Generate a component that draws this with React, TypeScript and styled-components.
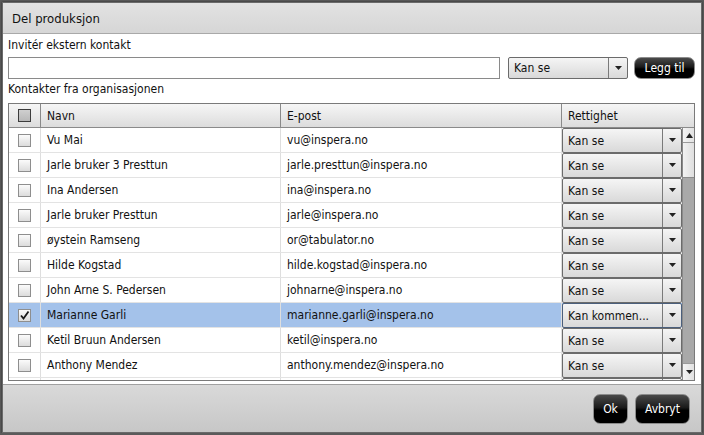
import React from 'react';
import styled, { createGlobalStyle } from 'styled-components';

type Contact = {
  name: string;
  email: string;
  right: string;
  checked?: boolean;
};

const contacts: Contact[] = [
  { name: 'Vu Mai', email: 'vu@inspera.no', right: 'Kan se' },
  { name: 'Jarle bruker 3 Presttun', email: 'jarle.presttun@inspera.no', right: 'Kan se' },
  { name: 'Ina Andersen', email: 'ina@inspera.no', right: 'Kan se' },
  { name: 'Jarle bruker Presttun', email: 'jarle@inspera.no', right: 'Kan se' },
  { name: 'øystein Ramseng', email: 'or@tabulator.no', right: 'Kan se' },
  { name: 'Hilde Kogstad', email: 'hilde.kogstad@inspera.no', right: 'Kan se' },
  { name: 'John Arne S. Pedersen', email: 'johnarne@inspera.no', right: 'Kan se' },
  { name: 'Marianne Garli', email: 'marianne.garli@inspera.no', right: 'Kan kommen...', checked: true },
  { name: 'Ketil Bruun Andersen', email: 'ketil@inspera.no', right: 'Kan se' },
  { name: 'Anthony Mendez', email: 'anthony.mendez@inspera.no', right: 'Kan se' },
  // the next row is only peeking in under the fold
  { name: '', email: '', right: '' },
];

const GlobalStyle = createGlobalStyle`
  body {
    margin: 0;
    background: #5b5b5b;
    font-family: "DejaVu Sans Condensed", "DejaVu Sans", sans-serif;
    font-size: 12px;
    color: #111;
  }
`;

const Window = styled.div`
  margin: 2px 0 0 2px;
  width: 700px;
  height: 431px;
  box-sizing: border-box;
  border: 1px solid #6a6a6a;
  background: #fff;
  display: flex;
  flex-direction: column;
  box-shadow: 0 0 2px rgba(0, 0, 0, 0.6);
`;

const TitleBar = styled.div`
  height: 30px;
  flex: none;
  display: flex;
  align-items: center;
  padding-left: 9px;
  font-size: 13px;
  background: linear-gradient(#e2e2e2, #d6d6d6);
  border-bottom: 1px solid #a9a9a9;
`;

const Body = styled.div`
  flex: 1;
  padding: 2px 6px 0 5px;
  display: flex;
  flex-direction: column;
  min-height: 0;
`;

const Label = styled.div`
  height: 18px;
  line-height: 18px;
`;

const InviteRow = styled.div`
  margin: 3px 0 1px;
  display: flex;
  align-items: center;
  height: 22px;
`;

const TextInput = styled.div`
  flex: 1;
  height: 22px;
  box-sizing: border-box;
  border: 1px solid #8a8a8a;
  background: #fff;
`;

const Select = styled.div<{ $width?: number; $active?: boolean }>`
  display: flex;
  box-sizing: border-box;
  width: ${(p) => (p.$width ? `${p.$width}px` : '100%')};
  height: 100%;
  border: 1px solid ${(p) => (p.$active ? '#4b5f7c' : '#6b6b6b')};
  border-radius: 2px;
  background: linear-gradient(#f5f5f5, #d9d9d9);
`;

const SelectValue = styled.div`
  flex: 1;
  display: flex;
  align-items: center;
  padding-left: 5px;
  white-space: nowrap;
  overflow: hidden;
`;

const SelectArrow = styled.div`
  width: 18px;
  flex: none;
  border-left: 1px solid #7a7a7a;
  display: flex;
  align-items: center;
  justify-content: center;
`;

const DarkButton = styled.div<{ $width: number; $height: number }>`
  width: ${(p) => p.$width}px;
  height: ${(p) => p.$height}px;
  box-sizing: border-box;
  border-radius: 7px;
  border: 1px solid #8c8c8c;
  background: linear-gradient(#4a4a4a 0%, #1a1a1a 45%, #000 55%, #000 100%);
  color: #fff;
  display: flex;
  align-items: center;
  justify-content: center;
  flex: none;
`;

const Table = styled.div`
  margin-top: 5px;
  height: 278px;
  box-sizing: border-box;
  border: 1px solid #7a7a7a;
  display: flex;
  flex-direction: column;
  overflow: hidden;
`;

const HeaderRow = styled.div`
  display: grid;
  grid-template-columns: 32px 240px 281px 1fr;
  height: 23px;
  flex: none;
  background: linear-gradient(#f6f6f6, #dcdcdc);
  border-bottom: 1px solid #8a8a8a;
`;

const HeaderCell = styled.div`
  display: flex;
  align-items: center;
  padding-left: 6px;
  border-right: 1px solid #8a8a8a;
  &:last-child {
    border-right: none;
  }
`;

const CheckCell = styled.div<{ $header?: boolean }>`
  display: flex;
  align-items: center;
  justify-content: center;
  border-right: 1px solid ${(p) => (p.$header ? '#8a8a8a' : '#dedede')};
`;

const Content = styled.div`
  flex: 1;
  display: flex;
  min-height: 0;
`;

const Rows = styled.div`
  width: 673px;
  flex: none;
  overflow: hidden;
`;

const Row = styled.div<{ $selected?: boolean }>`
  display: grid;
  grid-template-columns: 32px 240px 281px 120px;
  height: 25px;
  box-sizing: border-box;
  border-bottom: 1px solid #e3e3e3;
  background: ${(p) => (p.$selected ? '#a4c2ea' : '#fff')};
`;

const Cell = styled.div`
  display: flex;
  align-items: center;
  padding-left: 6px;
  border-right: 1px solid #dedede;
  white-space: nowrap;
  overflow: hidden;
`;

const RightCell = styled.div`
  margin-bottom: -1px;
`;

const Box = styled.div<{ $header?: boolean }>`
  width: 13px;
  height: 13px;
  box-sizing: border-box;
  border: 1px solid ${(p) => (p.$header ? '#3c3c3c' : '#8e8e8e')};
  background: ${(p) =>
    p.$header ? 'linear-gradient(#cfcfcf, #b8b8b8)' : 'linear-gradient(#fbfbfb, #dcdcdc)'};
  display: flex;
  align-items: center;
  justify-content: center;
`;

const ScrollBar = styled.div`
  width: 13px;
  flex: none;
  display: flex;
  flex-direction: column;
  background: #a9a9a9;
  border-left: 1px solid #8a8a8a;
`;

const ScrollButton = styled.div<{ $down?: boolean }>`
  height: ${(p) => (p.$down ? 16 : 14)}px;
  flex: none;
  display: flex;
  align-items: center;
  justify-content: center;
  background: linear-gradient(90deg, #f4f4f4, #dedede);
  border-${(p) => (p.$down ? 'top' : 'bottom')}: 1px solid #9a9a9a;
`;

const Thumb = styled.div`
  height: 34px;
  flex: none;
  background: linear-gradient(90deg, #f2f2f2, #dcdcdc);
  border-bottom: 1px solid #8c8c8c;
`;

const Track = styled.div`
  flex: 1;
`;

const Footer = styled.div`
  height: 47px;
  flex: none;
  margin-top: 3px;
  border-top: 1px solid #a0a0a0;
  background: linear-gradient(#d9d9d9, #c7c7c7);
  display: flex;
  align-items: center;
  justify-content: flex-end;
  gap: 7px;
  padding-right: 11px;
`;

const Spacer = styled.div<{ $w: number }>`
  width: ${(p) => p.$w}px;
  flex: none;
`;

const Arrow = ({ up }: { up?: boolean }) => (
  <svg width="7" height="5" viewBox="0 0 7 5">
    <path d={up ? 'M0 5 L3.5 0 L7 5 Z' : 'M0 0 L7 0 L3.5 4 Z'} fill="#222" />
  </svg>
);

const Check = () => (
  <svg width="11" height="11" viewBox="0 0 11 11">
    <path d="M2 5.5 L4.5 8.5 L9.5 1.5" stroke="#1a1a1a" strokeWidth="1.8" fill="none" />
  </svg>
);

export default function App(): JSX.Element {
  return (
    <>
      <GlobalStyle />
      <Window>
        <TitleBar>Del produksjon</TitleBar>
        <Body>
          <Label>Invitér ekstern kontakt</Label>
          <InviteRow>
            <TextInput />
            <Spacer $w={8} />
            <Select $width={120}>
              <SelectValue>Kan se</SelectValue>
              <SelectArrow>
                <Arrow />
              </SelectArrow>
            </Select>
            <Spacer $w={6} />
            <DarkButton $width={61} $height={22}>
              Legg til
            </DarkButton>
          </InviteRow>
          <Label>Kontakter fra organisasjonen</Label>
          <Table>
            <HeaderRow>
              <CheckCell $header>
                <Box $header />
              </CheckCell>
              <HeaderCell>Navn</HeaderCell>
              <HeaderCell>E-post</HeaderCell>
              <HeaderCell>Rettighet</HeaderCell>
            </HeaderRow>
            <Content>
              <Rows>
                {contacts.map((c, i) => (
                  <Row key={i} $selected={c.checked}>
                    <CheckCell>
                      <Box>{c.checked && <Check />}</Box>
                    </CheckCell>
                    <Cell>{c.name}</Cell>
                    <Cell>{c.email}</Cell>
                    <RightCell>
                      <Select $active={c.checked}>
                        <SelectValue>{c.right}</SelectValue>
                        <SelectArrow>
                          <Arrow />
                        </SelectArrow>
                      </Select>
                    </RightCell>
                  </Row>
                ))}
              </Rows>
              <ScrollBar>
                <ScrollButton>
                  <Arrow up />
                </ScrollButton>
                <Thumb />
                <Track />
                <ScrollButton $down>
                  <Arrow />
                </ScrollButton>
              </ScrollBar>
            </Content>
          </Table>
        </Body>
        <Footer>
          <DarkButton $width={35} $height={30}>
            Ok
          </DarkButton>
          <DarkButton $width={55} $height={30}>
            Avbryt
          </DarkButton>
        </Footer>
      </Window>
    </>
  );
}
